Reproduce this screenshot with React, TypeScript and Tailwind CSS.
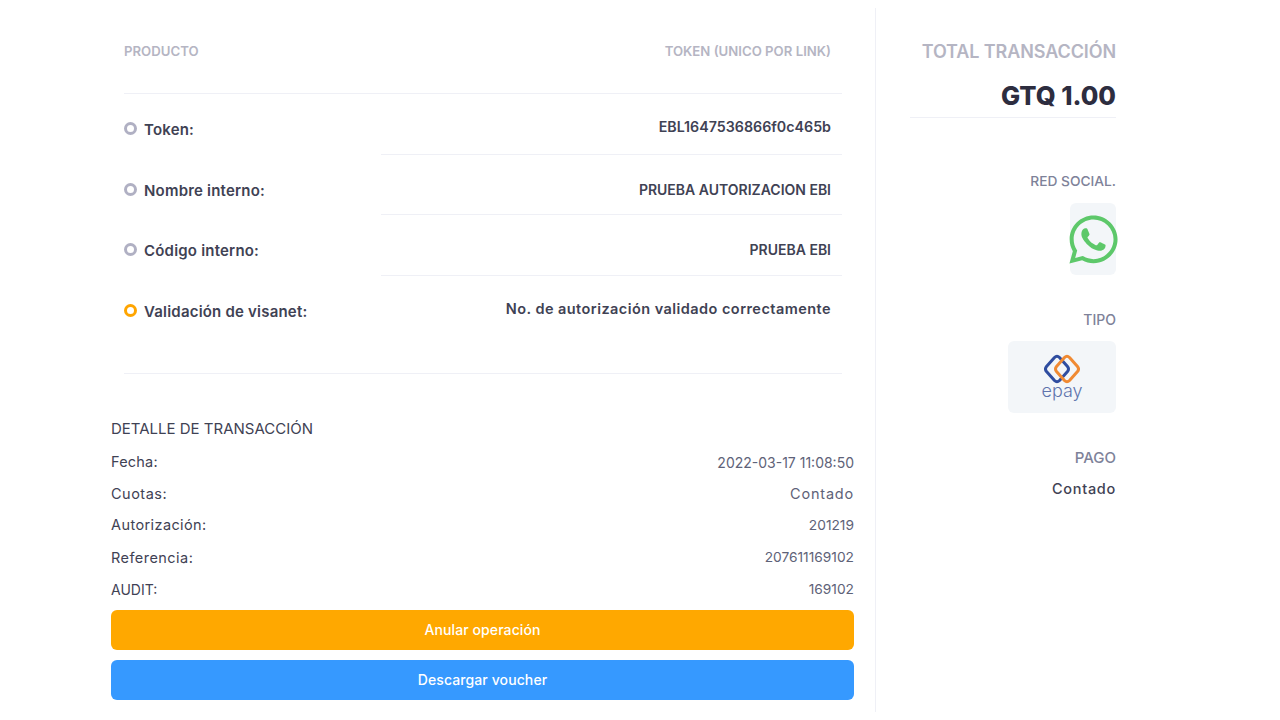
import { FaWhatsapp } from 'react-icons/fa';

const rows = [
  { label: 'Token:', value: 'EBL1647536866f0c465b', dot: 'border-[#b0b0c3]', h: 'h-[61px]', pt: 'pt-[23px]', size: 'text-[14.25px]', line: true },
  { label: 'Nombre interno:', value: 'PRUEBA AUTORIZACION EBI', dot: 'border-[#b0b0c3]', h: 'h-[60px]', pt: 'pt-[25px]', size: 'text-[14px]', line: true },
  { label: 'Código interno:', value: 'PRUEBA EBI', dot: 'border-[#b0b0c3]', h: 'h-[61px]', pt: 'pt-[25px]', size: 'text-[14px]', line: true },
  { label: 'Validación de visanet:', value: 'No. de autorización validado correctamente', dot: 'border-[#ffa500]', h: 'h-[97px]', pt: 'pt-[23px]', size: 'text-[14.5px] tracking-[0.45px]', line: false },
];

const details = [
  { k: 'Fecha:', v: '2022-03-17 11:08:50', h: 'h-[32px]', kc: 'tracking-[0.2px]', vc: 'text-[14px]' },
  { k: 'Cuotas:', v: 'Contado', h: 'h-[31px]', kc: 'tracking-[0.5px]', vc: 'tracking-[0.8px]' },
  { k: 'Autorización:', v: '201219', h: 'h-[32px]', kc: 'tracking-[0.4px]', vc: 'text-[13.75px]' },
  { k: 'Referencia:', v: '207611169102', h: 'h-[33px]', kc: 'tracking-[0.45px]', vc: 'text-[13.75px]' },
  { k: 'AUDIT:', v: '169102', h: 'h-[31px]', kc: 'text-[14px]', vc: 'text-[13.75px]' },
];

function EpayLogo() {
  return (
    <div className="flex flex-col items-center">
      <svg width="36" height="30" viewBox="0 0 36 30" fill="none">
        <path d="M15.500 3.500 Q13 1 10.500 3.500 L2.500 12.500 Q0.500 15 2.500 17.500 L10.500 26.500 Q13 29 15.500 26.500 L23.500 17.500 Q25.500 15 23.500 12.500 Z" stroke="#2f4da0" strokeWidth="3" strokeLinejoin="round" />
        <path d="M20.500 3.500 Q23 1 25.500 3.500 L33.500 12.500 Q35.500 15 33.500 17.500 L25.500 26.500 Q23 29 20.500 26.500 L12.500 17.500 Q10.500 15 12.500 12.500 Z" stroke="#f08a33" strokeWidth="3" strokeLinejoin="round" />
      </svg>
      <span className="-mt-[2px] text-[18px] font-light leading-[18px] text-[#5f74ad]">epay</span>
    </div>
  );
}

export default function App() {
  return (
    <div className="flex h-[720px] w-[1280px] overflow-hidden bg-white font-['Inter','Liberation_Sans',sans-serif]">
      <div className="ml-[111px] mt-[8px] w-[743px]">
        <div className="ml-[13px] w-[718px]">
          <div className="flex h-[86px] items-start justify-between border-b border-[#eff0f6] pr-[11px] pt-[35px] text-[13.2px] font-semibold leading-[16px] text-[#b5b5c3]">
            <span>PRODUCTO</span>
            <span>TOKEN (UNICO POR LINK)</span>
          </div>
          {rows.map((r) => (
            <div key={r.label} className={`flex ${r.h}`}>
              <div className="flex w-[257px] shrink-0 items-start gap-[7px] pt-[26px]">
                <span className={`mt-[2px] h-[13px] w-[13px] rounded-full border-[3px] ${r.dot}`} />
                <span className="text-[15px] font-semibold leading-[19px] tracking-[0.2px] text-[#3f4254]">{r.label}</span>
              </div>
              <div className={`flex-1 pr-[11px] text-right font-semibold leading-[19px] text-[#3f4254] ${r.pt} ${r.size} ${r.line ? 'border-b border-[#eff0f6]' : ''}`}>
                {r.value}
              </div>
            </div>
          ))}
          <div className="border-t border-[#eff0f6]" />
        </div>

        <h3 className="mt-[45px] text-[15px] font-normal leading-[20px] text-[#3f4254]">DETALLE DE TRANSACCIÓN</h3>
        <div className="mt-[7px]">
          {details.map((d) => (
            <div key={d.k} className={`flex items-center justify-between text-[14.5px] text-[#3f4254] ${d.h}`}>
              <span className={d.kc}>{d.k}</span>
              <span className={`text-[#5e6278] ${d.vc}`}>{d.v}</span>
            </div>
          ))}
        </div>
        <div className="mt-[5px] flex flex-col gap-[10px]">
          <button className="h-[40px] rounded-[6px] bg-[#ffa800] pb-[1px] text-[14px] font-medium tracking-[0.1px] text-white">Anular operación</button>
          <button className="h-[40px] rounded-[6px] bg-[#3699ff] pb-[1px] text-[14px] font-medium tracking-[0.1px] text-white">Descargar voucher</button>
        </div>
      </div>

      <div className="ml-[21px] mt-[8px] h-[704px] w-[241px] border-l border-[#eff0f6] pl-[34px]">
        <div className="flex h-[110px] flex-col items-end border-b border-[#eff0f6] pt-[32px]">
          <span className="text-[18px] font-semibold leading-[24px] tracking-[-0.1px] text-[#b5b5c3]">TOTAL TRANSACCIÓN</span>
          <span className="mt-[16px] text-[25.5px] font-extrabold leading-[32px] text-[#2d2d3f]">GTQ 1.00</span>
        </div>
        <div className="flex flex-col items-end">
          <span className="mt-[54px] text-[13.75px] font-medium leading-[18px] text-[#7e8299]">RED SOCIAL.</span>
          <div className="mt-[13px] flex h-[72px] w-[46px] items-center justify-center rounded-[6px] bg-[#f3f6f9]">
            <FaWhatsapp className="h-[55px] w-[55px] shrink-0 text-[#5dc86a]" />
          </div>
          <span className="mt-[36px] text-[14px] font-medium leading-[18px] text-[#7e8299]">TIPO</span>
          <div className="mt-[12px] flex h-[72px] w-[108px] items-center justify-center rounded-[6px] bg-[#f3f6f9]">
            <EpayLogo />
          </div>
          <span className="mt-[36px] text-[15px] font-medium leading-[18px] text-[#7e8299]">PAGO</span>
          <span className="mt-[12px] text-[14.5px] font-medium leading-[20px] tracking-[0.7px] text-[#3f4254]">Contado</span>
        </div>
      </div>
    </div>
  );
}
